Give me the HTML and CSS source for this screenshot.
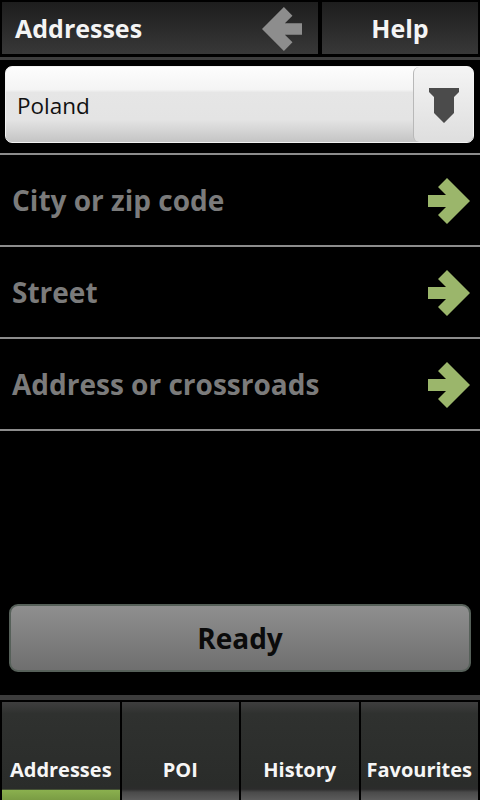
FILE: index.html
```html
<!DOCTYPE html>
<html lang="en">
<head>
    <meta charset="UTF-8">
    <title>Addresses</title>
    <meta name="viewport" content="width=device-width, initial-scale=1">
    <link rel="stylesheet" href="styles.css">
</head>
<body>
    <div class="screen">
        <header class="topbar">
            <div class="title-panel">
                <h1>Addresses</h1>
                <svg class="back-icon" width="40" height="44" viewBox="0 0 42 46">
                    <polygon points="42,17 24,17 32,9 23,0 0,23 23,46 32,37 24,29 42,29" fill="#8d8d8d"/>
                </svg>
            </div>
            <div class="help-panel">Help</div>
        </header>
        <div class="topbar-line"></div>

        <div class="spinner">
            <span class="spinner-value">Poland</span>
            <div class="spinner-btn">
                <svg width="30" height="36" viewBox="0 0 30 36">
                    <polygon points="0,0 30,0 30,4 25,9 25,25 15,35 5,25 5,9 0,4" fill="#4b4b4b"/>
                </svg>
            </div>
        </div>

        <ul class="fields">
            <li class="field">
                <span>City or zip code</span>
                <svg class="go-icon" width="42" height="46" viewBox="0 0 42 46">
                    <polygon points="0,17 18,17 10,9 19,0 42,23 19,46 10,37 18,29 0,29" fill="#9bb66b"/>
                </svg>
            </li>
            <li class="field">
                <span>Street</span>
                <svg class="go-icon" width="42" height="46" viewBox="0 0 42 46">
                    <polygon points="0,17 18,17 10,9 19,0 42,23 19,46 10,37 18,29 0,29" fill="#9bb66b"/>
                </svg>
            </li>
            <li class="field">
                <span>Address or crossroads</span>
                <svg class="go-icon" width="42" height="46" viewBox="0 0 42 46">
                    <polygon points="0,17 18,17 10,9 19,0 42,23 19,46 10,37 18,29 0,29" fill="#9bb66b"/>
                </svg>
            </li>
        </ul>

        <div class="spacer"></div>

        <button class="ready-btn">Ready</button>

        <div class="tabs-line"></div>
        <nav class="tabs">
            <div class="tab active">Addresses</div>
            <div class="tab">POI</div>
            <div class="tab">History</div>
            <div class="tab">Favourites</div>
        </nav>
    </div>
</body>
</html>
```

FILE: styles.css
```css
body {
    margin: 0;
    padding: 0;
    background: #000;
    font-family: 'Open Sans', 'DejaVu Sans', sans-serif;
}
.screen {
    width: 480px;
    height: 800px;
    display: flex;
    flex-direction: column;
    overflow: hidden;
}
.topbar {
    display: flex;
    gap: 4px;
    padding: 2px 2px 0 2px;
    height: 52px;
}
.title-panel, .help-panel {
    background: linear-gradient(#1d1d1d, #383838);
    color: #f4f4f4;
    font-weight: 700;
    font-size: 26px;
}
.title-panel {
    width: 316px;
    display: flex;
    align-items: center;
    justify-content: space-between;
    padding: 0 16px 0 13px;
    box-sizing: border-box;
}
.title-panel h1 {
    margin: 0;
    font-size: 25px;
    font-weight: 700;
}
.back-icon {
    margin-top: 2px;
}
.help-panel {
    flex: 1;
    display: flex;
    align-items: center;
    justify-content: center;
    font-size: 25px;
}
.topbar-line {
    height: 3px;
    margin-top: 3px;
    background: #3e3e3e;
}
.spinner {
    margin: 6px 6px 0 5px;
    height: 77px;
    box-sizing: border-box;
    border: 1px solid #f2f2f2;
    border-radius: 7px;
    background: linear-gradient(#fdfdfd 0%, #f4f4f4 30%, #e6e6e6 34%, #e4e4e4 70%, #c4c4c4 100%);
    display: flex;
    align-items: center;
    overflow: hidden;
}
.spinner-value {
    flex: 1;
    padding-left: 11px;
    font-size: 22.5px;
    color: #111;
    margin-top: 1px;
}
.spinner-btn {
    width: 60px;
    height: 100%;
    border-left: 1px solid #b8b8b8;
    border-radius: 6px;
    background: linear-gradient(#f4f4f4, #dedede);
    display: flex;
    justify-content: center;
    padding-top: 21px;
    box-sizing: border-box;
}
.fields {
    list-style: none;
    margin: 10px 0 0 0;
    padding: 0;
    border-top: 2px solid #8c8c8c;
}
.field {
    height: 90px;
    border-bottom: 2px solid #8c8c8c;
    display: flex;
    align-items: center;
    justify-content: space-between;
    padding: 0 10px 0 12px;
    color: #7b7b7b;
    font-size: 28px;
    font-weight: 700;
}
.go-icon {
    margin-top: 2px;
}
.spacer {
    flex: 1;
}
.ready-btn {
    margin: 0 9px 23px 9px;
    height: 68px;
    border: 2px solid #566059;
    border-radius: 9px;
    background: linear-gradient(#8f8f8f, #6f6f6f);
    color: #0b0b0b;
    font-family: 'Open Sans', 'DejaVu Sans', sans-serif;
    font-size: 28px;
    font-weight: 700;
}
.tabs-line {
    height: 5px;
    background: #3c3c3c;
    margin-bottom: 2px;
}
.tabs {
    display: flex;
    gap: 2px;
    padding: 0 2px;
    height: 98px;
}
.tab {
    flex: 1;
    background: linear-gradient(#3e3e3e 0%, #2f312f 12%, #2a2c2a 85%, #2c2c2c 89%, #4a4a4a 92%, #5c5c5c 100%);
    color: #f6f6f6;
    font-size: 20px;
    font-weight: 700;
    display: flex;
    align-items: flex-end;
    justify-content: center;
    padding-bottom: 17px;
    box-sizing: border-box;
    white-space: nowrap;
}
.tab.active {
    background: linear-gradient(#3e3e3e 0%, #2f312f 12%, #2a2c2a 89%, #8ab04e 90%, #7a9c44 100%);
}
```
